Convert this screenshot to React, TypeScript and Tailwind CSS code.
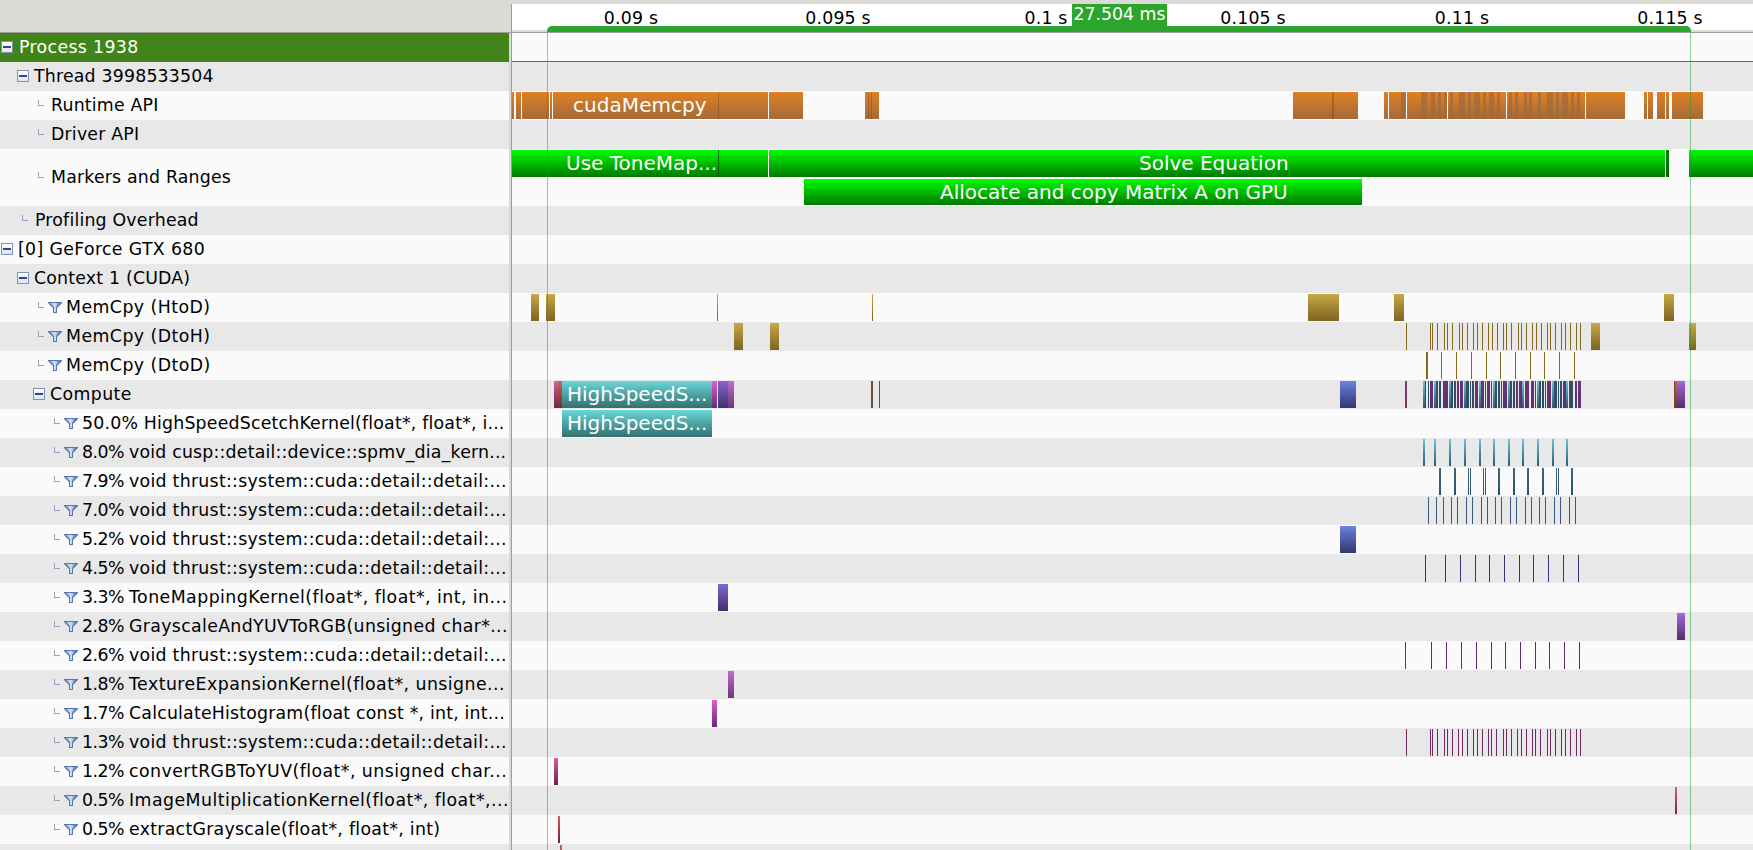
const gold = "from-[#c8a848] to-[#7e6420]"
const orange = "from-[#e08020] to-[#a46a36]"
const stripe = "from-[#b0703a] to-[#a06a38]"
const seam = "from-[#b06a20] to-[#8a5a30]"
const green = "from-[#00ff00] to-[#007a00]"
const teal = "from-[#6ad8d8] to-[#347070]"
const cyan = "from-[#68c4d8] to-[#2f5c70]"
const steel = "from-[#3f6880] to-[#2c5068]"
const slate = "from-[#3d5c88] to-[#34507a]"
const blue = "from-[#6c84dc] to-[#30386e]"
const navy = "from-[#3a3478] to-[#3a3070]"
const indigo = "from-[#8468d4] to-[#40306e]"
const violet = "from-[#a468dc] to-[#50306c]"
const orchid = "from-[#c868d4] to-[#6a3878]"
const magenta = "from-[#e060d0] to-[#6a2878]"
const pink = "from-[#d860a0] to-[#702050]"
const rose = "from-[#d06080] to-[#6a2a40]"
const red = "from-[#d85868] to-[#702030]"
const coral = "from-[#d06060] to-[#6e3030]"
const plum = "from-[#5e2c74] to-[#5a2a70]"
const wine = "from-[#742c64] to-[#702a60]"
const brown = "from-[#6a5030] to-[#6a5030]"
const mauve = "from-[#80406e] to-[#703860]"
const denim = "from-[#35506a] to-[#2f4a60]"
const grape = "from-[#6a3478] to-[#5a3070]"
const ochre = "from-[#84691f] to-[#84691f]"

type Bar = [number, number, string]

function thin(xs: number[], color: string, base = 1400, w = 1): Bar[] {
  return xs.map((z) => [base + z / 3, base + z / 3 + w, color] as Bar)
}

function spans(xs: [number, number][], color: string): Bar[] {
  return xs.map(([a, b]) => [1400 + a / 3, 1400 + b / 3, color] as Bar)
}

function Bars({ bars }: { bars: Bar[] }) {
  return (
    <>
      {bars.map(([from, to, color], i) => (
        <div
          key={i}
          className={`absolute top-px bottom-px bg-gradient-to-b ${color}`}
          style={{ left: from - 512, width: to - from }}
        />
      ))}
    </>
  )
}

// a range on the timeline that carries its name
function Named({ from, to, color, text, left }: { from: number; to: number; color: string; text: string; left: number }) {
  return (
    <div
      className={`absolute top-px bottom-px bg-gradient-to-b ${color} text-white text-[20px] leading-[26px] whitespace-nowrap overflow-hidden`}
      style={{ left: from - 512, width: to - from, paddingLeft: left - from }}
    >
      {text}
    </div>
  )
}

function Minus() {
  return (
    <span className="shrink-0 -mt-px w-[12px] h-[12px] border border-[#7f93b8] bg-gradient-to-b from-white to-[#dfe5ef] flex items-center justify-center">
      <span className="block w-[8px] h-[2px] bg-[#2b4a8c]" />
    </span>
  )
}

function Corner() {
  return <span className="shrink-0 -mt-[5px] w-[6px] h-[6px] border-l border-b border-[#8fa3c4]" />
}

function Funnel() {
  return (
    <svg className="shrink-0" width="14" height="11" viewBox="0 0 14 11">
      <defs>
        <linearGradient id="fn" x1="0" x2="1" y1="0" y2="0">
          <stop offset="0" stopColor="#9db6da" />
          <stop offset="0.5" stopColor="#d5e1f3" />
          <stop offset="1" stopColor="#4f73a8" />
        </linearGradient>
      </defs>
      <path d="M0 0 H14 V1 L9 6 V11 H5 V6 L0 1 Z" fill="#5579ae" />
      <path d="M2 1 H12 L8 5 V10 H6 V5 Z" fill="url(#fn)" />
    </svg>
  )
}

type Kind = "box" | "leaf" | "mem" | "kernel"

function Label({ row }: { row: Row }) {
  const { kind, text = "", indent = 0, selected, track = "tracking-[0.2px]", split } = row
  const space = text.indexOf(" ")
  return (
    <div
      className={`flex h-full items-center text-[17.33px] whitespace-nowrap ${track} ${selected ? "text-white" : "text-black"}`}
      style={{ paddingLeft: indent }}
    >
      {kind === "box" && <span className={`${selected ? "mr-[6px]" : "mr-[5px]"} flex`}><Minus /></span>}
      {kind === "leaf" && <span className="mr-[7px] flex"><Corner /></span>}
      {(kind === "mem" || kind === "kernel") && (
        <span className="mr-[4px] flex items-center gap-[4px]">
          <Corner />
          <Funnel />
        </span>
      )}
      {split ? (
        <span>
          <span className="tracking-[-0.5px]">{text.slice(0, space + 1)}</span>
          {text.slice(space + 1)}
        </span>
      ) : (
        <span>{text}</span>
      )}
    </div>
  )
}

type Row = { kind?: Kind; text?: string; indent?: number; selected?: boolean; bars?: Bar[]; body?: any; tall?: boolean; track?: string; split?: boolean }

const voidRow = (text: string, bars: Bar[]): Row => ({ kind: "kernel", indent: 54, text, bars, split: true, track: "tracking-[0.28px]" })
const wide = (text: string, bars: Bar[]): Row => ({ kind: "kernel", indent: 54, text, bars, split: true, track: "tracking-[0.45px]" })
const mid = (text: string, bars: Bar[]): Row => ({ kind: "kernel", indent: 54, text, bars, split: true, track: "tracking-[0.34px]" })
const mem = (text: string, bars: Bar[]): Row => ({ kind: "mem", indent: 38, text, bars, track: "tracking-[0.45px]" })

const tealStops = spans([[69, 75], [102, 108], [147, 153], [192, 198], [237, 243], [279, 285], [324, 330], [366, 372], [411, 417], [456, 462], [498, 504]], cyan)

const rows: Row[] = [
  { kind: "box", text: "Process 1938", indent: 1, selected: true, track: "tracking-[0.35px]" },
  { kind: "box", text: "Thread 3998533504", indent: 17 },
  {
    kind: "leaf",
    text: "Runtime API",
    indent: 38,
    bars: [
      [512, 514, orange], [516, 521, orange], [522, 549, orange], [550, 552, orange], [553, 555, orange],
      [555, 768, orange], [769, 803, orange], [865, 879, orange],
      [1293, 1358, orange], [1384, 1388, orange], [1389, 1406, orange], [1407, 1447, orange],
      [1448, 1506, orange], [1507, 1585, orange], [1586, 1625, orange], [1644, 1647, orange],
      [1648, 1653, orange], [1657, 1665, orange], [1666, 1669, orange], [1672, 1703, orange],
      [718, 719, seam], [868, 869, seam], [871, 872, seam], [1332, 1334, seam], [1401, 1406, stripe],
      ...spans(
        [[63, 81], [93, 105], [114, 123], [132, 141], [150, 159], [177, 195], [204, 213], [222, 240], [249, 258], [267, 282], [291, 300], [327, 336], [345, 354], [372, 381], [387, 396], [414, 423], [441, 459], [468, 477], [486, 504], [513, 522], [531, 540]],
        stripe,
      ),
    ],
    body: <div className="absolute left-[61px] top-px text-white text-[20px] tracking-[0.05px] leading-[27px]">cudaMemcpy</div>,
  },
  { kind: "leaf", text: "Driver API", indent: 38 },
  {
    kind: "leaf",
    text: "Markers and Ranges",
    indent: 38,
    tall: true,
    body: (
      <div className="flex flex-col h-full">
        <div className="relative h-[29px]">
          <Named from={512} to={768} color={green} text="Use ToneMap..." left={566} />
          <Named from={769} to={1665} color={green} text="Solve Equation" left={1139} />
          <Bars bars={[[718, 719, "from-[#007a00] to-[#005a00]"], [1666, 1669, "from-[#007a00] to-[#006a00]"], [1689, 1753, green]]} />
        </div>
        <div className="relative h-[28px]">
          <Named from={804} to={1362} color={green} text="Allocate and copy Matrix A on GPU" left={940} />
        </div>
      </div>
    ),
  },
  { kind: "leaf", text: "Profiling Overhead", indent: 22 },
  { kind: "box", text: "[0] GeForce GTX 680", indent: 1, track: "tracking-[0.35px]" },
  { kind: "box", text: "Context 1 (CUDA)", indent: 17 },
  mem("MemCpy (HtoD)", [[531, 539, gold], [546, 555, gold], [717, 718, gold], [872, 873, gold], [1308, 1339, gold], [1394, 1404, gold], [1664, 1674, gold]]),
  mem("MemCpy (DtoH)", [
    [734, 743, gold], [770, 779, gold], [1406, 1407, ochre],
    ...thin([390, 396, 411, 432, 441, 456, 477, 486, 501, 519, 531, 546, 564, 576, 591, 609, 618, 633, 654, 663, 678, 696, 708, 723, 741, 750, 765, 783, 795, 810, 828, 840], ochre, 1300),
    [1591, 1600, gold], [1689, 1696, gold],
  ]),
  mem("MemCpy (DtoD)", [[1426, 1428, ochre], ...thin([423, 468, 513, 558, 600, 645, 690, 732, 777, 822], ochre, 1300)]),
  {
    kind: "box",
    text: "Compute",
    indent: 33,
    track: "tracking-[0.4px]",
    bars: [
      [554, 558, pink], [558, 562, coral], [712, 717, magenta], [718, 728, indigo], [728, 734, orchid],
      [871, 873, brown], [879, 880, brown], [1340, 1356, blue], [1405, 1407, mauve],
      ...tealStops,
      ...spans([[75, 78], [84, 87], [108, 114], [117, 123], [153, 159], [162, 168], [198, 207], [210, 213], [216, 222], [255, 258], [273, 276], [285, 291], [294, 300], [303, 306], [330, 336], [339, 345], [405, 408], [417, 423], [426, 432], [435, 438], [462, 471], [474, 477], [480, 486], [507, 519]], denim),
      ...spans([[90, 99], [129, 144], [171, 177], [180, 189], [225, 234], [243, 252], [261, 270], [309, 321], [348, 354], [357, 366], [375, 387], [393, 402], [441, 453], [489, 498], [525, 531], [534, 543]], grape),
      [1674, 1675, brown], [1675, 1677, coral], [1677, 1685, violet],
    ],
    body: <Named from={562} to={712} color={teal} text="HighSpeedS..." left={567} />,
  },
  { kind: "kernel", indent: 54, text: "50.0% HighSpeedScetchKernel(float*, float*, i...", body: <Named from={562} to={712} color={teal} text="HighSpeedS..." left={567} /> },
  { kind: "kernel", indent: 54, text: "8.0% void cusp::detail::device::spmv_dia_kern...", bars: tealStops, split: true },
  voidRow("7.9% void thrust::system::cuda::detail::detail:...", spans([[117, 123], [162, 168], [204, 207], [210, 213], [249, 252], [255, 258], [294, 300], [339, 345], [381, 387], [426, 432], [468, 471], [474, 477], [513, 519]], steel)),
  voidRow("7.0% void thrust::system::cuda::detail::detail:...", thin([144, 168, 189, 213, 231, 258, 276, 303, 321, 345, 363, 390, 408, 435, 453, 477, 495, 522, 540, 567, 585], slate, 1380)),
  voidRow("5.2% void thrust::system::cuda::detail::detail:...", [[1340, 1356, blue]]),
  voidRow("4.5% void thrust::system::cuda::detail::detail:...", thin([135, 195, 240, 285, 327, 372, 417, 459, 504, 549, 594], navy, 1380)),
  wide("3.3% ToneMappingKernel(float*, float*, int, in...", [[718, 728, indigo]]),
  mid("2.8% GrayscaleAndYUVToRGB(unsigned char*...", [[1677, 1685, violet]]),
  voidRow("2.6% void thrust::system::cuda::detail::detail:...", thin([75, 153, 198, 243, 288, 333, 375, 420, 465, 507, 552, 597], plum, 1380)),
  wide("1.8% TextureExpansionKernel(float*, unsigne...", [[728, 734, orchid]]),
  { kind: "kernel", indent: 54, text: "1.7% CalculateHistogram(float const *, int, int...", bars: [[712, 717, magenta]], split: true },
  voidRow("1.3% void thrust::system::cuda::detail::detail:...", thin([78, 150, 156, 171, 192, 201, 216, 234, 246, 261, 279, 291, 306, 324, 333, 348, 369, 378, 393, 411, 423, 438, 456, 465, 480, 501, 510, 525, 543, 555, 570, 588, 600], wine, 1380)),
  wide("1.2% convertRGBToYUV(float*, unsigned char...", [[554, 558, pink]]),
  wide("0.5% ImageMultiplicationKernel(float*, float*,...", [[1675, 1677, rose]]),
  voidRow("0.5% extractGrayscale(float*, float*, int)", [[558, 560, red]]),
  { bars: [[560, 562, coral]] },
]

const ticks = [
  { text: "0.09 s", x: 119 },
  { text: "0.095 s", x: 326 },
  { text: "0.1 s", x: 534 },
  { text: "0.105 s", x: 741 },
  { text: "0.11 s", x: 950 },
  { text: "0.115 s", x: 1158 },
]

export default function App() {
  return (
    <div className="w-[1753px] h-[850px] overflow-hidden flex flex-col bg-[#dcdad5] font-['DejaVu_Sans',sans-serif]">
      <div className="flex h-[33px] shrink-0 border-b border-[#a09d98]">
        <div className="w-[511px] shrink-0" />
        <div className="w-px shrink-0 mt-[4px] bg-[#a09d98]" />
        <div className="relative flex-1 mt-[4px]">
          <div className="absolute inset-x-0 top-0 h-[26px] bg-white" />
          {ticks.map((t) => (
            <div key={t.text} className="absolute top-[3px] -translate-x-1/2 text-[17.33px] tracking-[0.2px] leading-[22px] whitespace-nowrap text-black" style={{ left: t.x }}>
              {t.text}
            </div>
          ))}
          <div className="absolute left-[35px] w-[1144px] top-[22px] h-[6px] bg-[#2ca52c] rounded-t-[5px]" />
          <div className="absolute left-[560px] w-[95px] top-0 h-[24px] bg-[#2ca52c] text-white text-[17.33px] leading-[20px] text-center whitespace-nowrap">27.504 ms</div>
        </div>
      </div>
      <div className="relative flex-1 overflow-hidden">
        {rows.map((r, i) => {
          const tint = i % 2 === 1 ? "bg-[#e8e8e8]" : "bg-[#fafafa]"
          return (
            <div key={i} className={`flex ${r.tall ? "h-[57px]" : "h-[29px]"}`}>
              <div className={`w-[509px] shrink-0 overflow-hidden ${r.selected ? "bg-[#41851a]" : tint}`}>
                {r.kind && <Label row={r} />}
              </div>
              <div className="w-[2px] shrink-0 bg-[#dcdad5]" />
              <div className="w-px shrink-0 bg-[#a09d98]" />
              <div className={`relative flex-1 ${r.selected ? "bg-[#fafafa] border-b border-[#41851a]" : tint}`}>
                {r.bars && <Bars bars={r.bars} />}
                {r.body}
              </div>
            </div>
          )
        })}
        <div className="absolute inset-y-0 left-[547px] w-px bg-[#20a030]/50" />
        <div className="absolute inset-y-0 left-[1690px] w-px bg-[#20a030]/50" />
      </div>
    </div>
  )
}
